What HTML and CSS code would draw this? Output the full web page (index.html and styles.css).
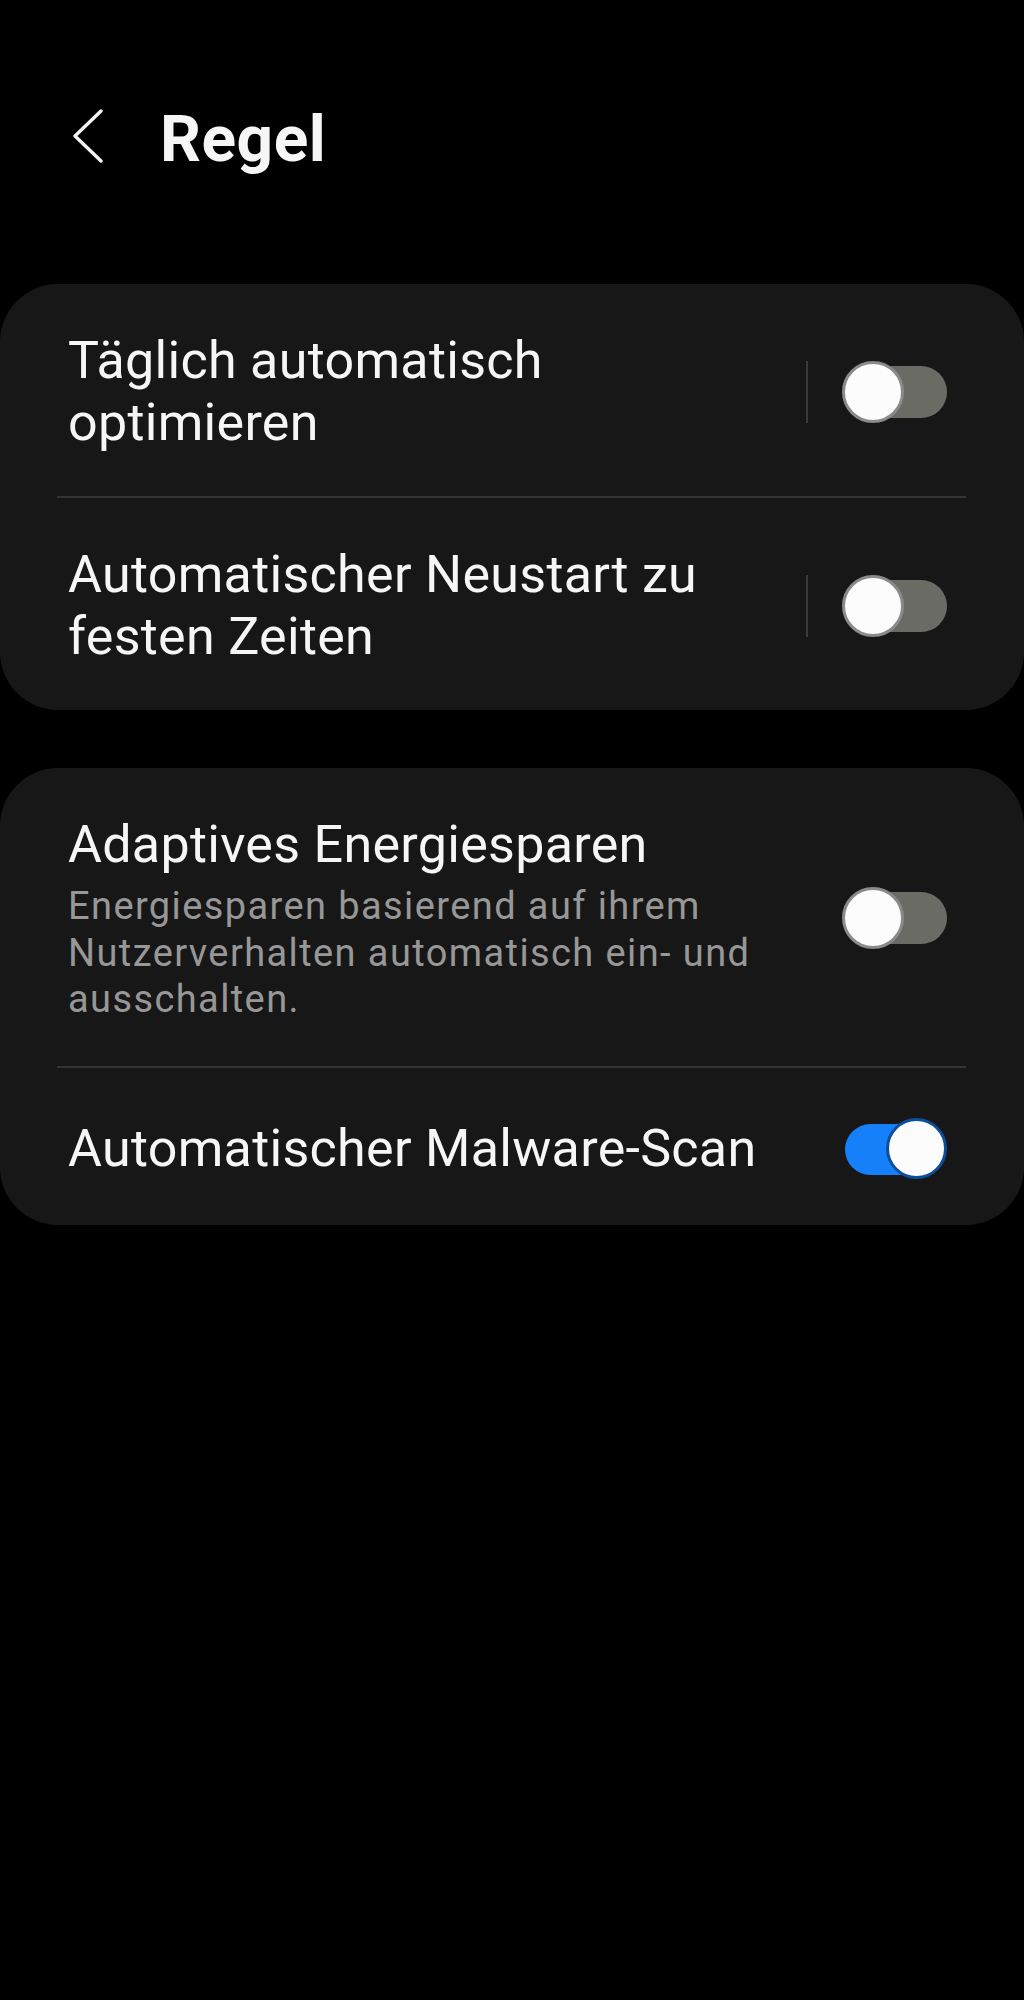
FILE: index.html
```html
<!DOCTYPE html>
<html lang="de">
<head>
<meta charset="utf-8">
<title>Regel</title>
<link rel="stylesheet" href="styles.css">
</head>
<body>
<header class="header">
  <svg class="back" width="30" height="54" viewBox="0 0 30 54" aria-hidden="true">
    <polyline points="28,2 2,27 28,52" fill="none" stroke="#f4f4f4" stroke-width="3.4" stroke-linecap="round" stroke-linejoin="round"/>
  </svg>
  <h1 class="title">Regel</h1>
</header>
<main class="cards">
  <section class="card">
    <div class="row row-a">
      <div class="text text-sep"><div class="item-title">Täglich automatisch optimieren</div></div>
      <div class="vsep"></div>
      <div class="switch off"><div class="track"></div><div class="knob"></div></div>
    </div>
    <div class="divider"></div>
    <div class="row row-a">
      <div class="text text-sep"><div class="item-title">Automatischer Neustart zu festen Zeiten</div></div>
      <div class="vsep"></div>
      <div class="switch off"><div class="track"></div><div class="knob"></div></div>
    </div>
  </section>
  <section class="card">
    <div class="row row-c">
      <div class="text">
        <div class="item-title">Adaptives Energiesparen</div>
        <div class="item-sub">Energiesparen basierend auf ihrem Nutzerverhalten automatisch ein- und ausschalten.</div>
      </div>
      <div class="switch off"><div class="track"></div><div class="knob"></div></div>
    </div>
    <div class="divider"></div>
    <div class="row row-d">
      <div class="text"><div class="item-title">Automatischer Malware-Scan</div></div>
      <div class="switch on"><div class="track"></div><div class="knob"></div></div>
    </div>
  </section>
</main>
</body>
</html>
```

FILE: styles.css
```css
html, body {
  margin: 0;
  padding: 0;
  background: #000;
}
body {
  font-family: Roboto, "Noto Sans", "Liberation Sans", sans-serif;
  color: #f6f6f6;
  min-height: 2000px;
}
.header {
  display: flex;
  align-items: flex-start;
  padding: 102px 0 106px 73px;
}
.back {
  display: block;
  margin-top: 7px;
  flex: none;
}
.title {
  margin: 0 0 0 57px;
  font-size: 64px;
  line-height: 76px;
  font-weight: 700;
  color: #f6f6f6;
  letter-spacing: 0.5px;
}
.cards {
  display: flex;
  flex-direction: column;
  gap: 58px;
}
.card {
  background: #171717;
  border-radius: 58px;
}
.row {
  display: flex;
  align-items: center;
  padding: 46px 77px 42px 68px;
}
.row-c {
  padding-bottom: 43px;
}
.row-d {
  padding-top: 50px;
  padding-bottom: 45px;
}
.text {
  flex: 1;
  min-width: 0;
  margin-right: 40px;
}
.text-sep {
  margin-right: 30px;
}
.item-title {
  font-size: 52px;
  line-height: 62px;
  font-weight: 400;
  color: #f6f6f6;
  letter-spacing: 0.3px;
}
.item-sub {
  margin-top: 7px;
  font-size: 38px;
  line-height: 46.5px;
  color: #979797;
  letter-spacing: 1.4px;
}
.vsep {
  flex: none;
  width: 2px;
  height: 62px;
  background: #3a3a3a;
  margin-right: 34px;
}
.divider {
  height: 2px;
  margin: 0 58px 0 57px;
  background: #343434;
}
.switch {
  flex: none;
  position: relative;
  width: 105px;
  height: 62px;
}
.track {
  position: absolute;
  top: 5px;
  height: 52px;
  border-radius: 26px;
}
.knob {
  position: absolute;
  top: 0;
  width: 62px;
  height: 62px;
  box-sizing: border-box;
  border-radius: 50%;
  background: #fcfcfc;
}
.off .track {
  left: 4px;
  width: 101px;
  background: #6b6b66;
}
.off .knob {
  left: 0;
  border: 3px solid #8a8a8a;
}
.on .track {
  left: 3px;
  width: 100px;
  top: 6px;
  height: 51px;
  background: #1580fa;
}
.on .knob {
  left: 44px;
  width: 61px;
  height: 61px;
  top: 0;
  border: 3px solid #0c4e9c;
}
```
